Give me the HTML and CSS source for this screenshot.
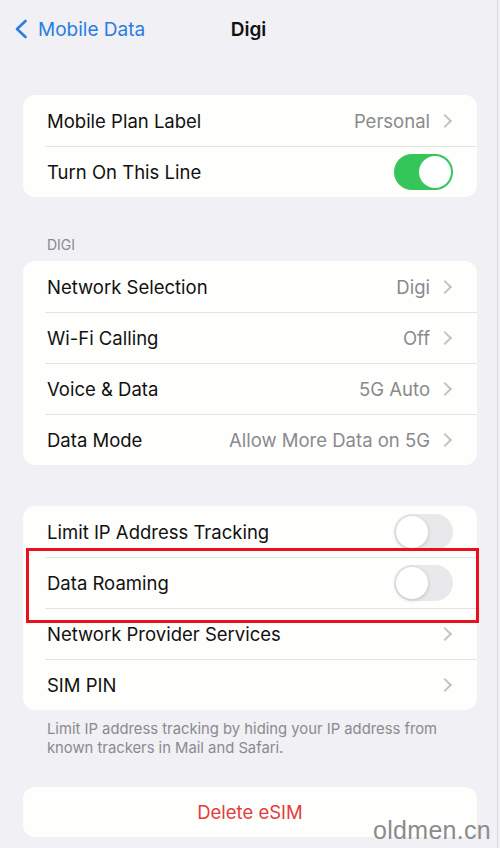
FILE: index.html
```html
<!DOCTYPE html>
<html lang="en">
  <head>
    <meta charset="UTF-8" />
    <meta name="viewport" content="width=device-width, initial-scale=1.0" />
    <title>Digi</title>
    <link rel="stylesheet" href="styles.css">
  </head>
  <body>
    <div class="screen">
      <header class="nav">
        <a class="nav-back" href="#">
          <svg class="nav-chevron" viewBox="0 0 14 20" width="14" height="20">
            <path d="M11.5 2 L3 10 L11.5 18" fill="none" stroke="currentColor" stroke-width="2.6" stroke-linecap="round" stroke-linejoin="round"/>
          </svg>
          <span>Mobile Data</span>
        </a>
        <h1 class="nav-title">Digi</h1>
        <span></span>
      </header>

      <main class="main">
        <ul class="group">
          <li class="row">
            <span class="row-label">Mobile Plan Label</span>
            <span class="row-value">Personal</span>
            <span class="chev"></span>
          </li>
          <li class="row">
            <span class="row-label">Turn On This Line</span>
            <span class="toggle on"></span>
          </li>
        </ul>

        <h2 class="group-title">DIGI</h2>
        <ul class="group">
          <li class="row">
            <span class="row-label">Network Selection</span>
            <span class="row-value">Digi</span>
            <span class="chev"></span>
          </li>
          <li class="row">
            <span class="row-label">Wi-Fi Calling</span>
            <span class="row-value">Off</span>
            <span class="chev"></span>
          </li>
          <li class="row">
            <span class="row-label">Voice &amp; Data</span>
            <span class="row-value">5G Auto</span>
            <span class="chev"></span>
          </li>
          <li class="row">
            <span class="row-label">Data Mode</span>
            <span class="row-value">Allow More Data on 5G</span>
            <span class="chev"></span>
          </li>
        </ul>

        <ul class="group group-marked">
          <li class="row">
            <span class="row-label">Limit IP Address Tracking</span>
            <span class="toggle"></span>
          </li>
          <li class="row">
            <span class="row-label">Data Roaming</span>
            <span class="toggle"></span>
          </li>
          <li class="row">
            <span class="row-label">Network Provider Services</span>
            <span class="chev"></span>
          </li>
          <li class="row">
            <span class="row-label">SIM PIN</span>
            <span class="chev"></span>
          </li>
          <li class="mark"></li>
        </ul>
        <p class="group-note">Limit IP address tracking by hiding your IP address from known trackers in Mail and Safari.</p>

        <div class="group">
          <button class="danger">Delete eSIM</button>
        </div>
      </main>

      <div class="watermark">oldmen.cn</div>
    </div>
  </body>
</html>
```

FILE: styles.css
```css
body {
  margin: 0;
  background: #f0f0f5;
  font-family: Inter, "Noto Sans", sans-serif;
  color: #111;
}
.screen {
  position: relative;
  width: 497px;
  height: 848px;
  border-right: 1px solid #dcdce1;
  overflow: hidden;
}

.nav {
  display: grid;
  grid-template-columns: 1fr auto 1fr;
  align-items: center;
  height: 58px;
}
.nav-back {
  display: flex;
  align-items: center;
  gap: 10px;
  padding-left: 14px;
  color: #2a7de1;
  text-decoration: none;
  font-size: 19px;
}
.nav-title {
  margin: 0;
  font-size: 19px;
  font-weight: 600;
}

.main {
  padding: 37px 20px 0 23px;
}
.group {
  list-style: none;
  margin: 0;
  padding: 0;
  background: #fefefc;
  border-radius: 12px;
}
.group-marked {
  position: relative;
  margin-top: 41px;
}
.row {
  display: flex;
  align-items: center;
  height: 50px;
  margin-left: 22px;
  padding: 0 24px 0 2px;
  border-top: 1px solid #e4e4e7;
  font-size: 18.5px;
}
.row:first-child {
  height: 51px;
  border-top: 0;
}
.row-label {
  flex: 1;
}
.row-value {
  color: #8a8a8e;
}
.chev {
  width: 8px;
  height: 8px;
  margin: 0 3px 0 10px;
  border-top: 2px solid #c4c4c8;
  border-right: 2px solid #c4c4c8;
  transform: rotate(45deg);
}

.toggle {
  position: relative;
  width: 59px;
  height: 36px;
  border-radius: 18px;
  background: #e9e9eb;
}
.toggle::after {
  content: "";
  position: absolute;
  left: 2px;
  top: 2px;
  width: 32px;
  height: 32px;
  border-radius: 50%;
  background: #fff;
  box-shadow: 0 1px 4px rgba(0, 0, 0, 0.18);
}
.toggle.on {
  background: #34c659;
}
.toggle.on::after {
  left: 25px;
  box-shadow: none;
}

.group-title {
  margin: 39px 0 8px 24px;
  font-size: 14px;
  font-weight: 400;
  color: #8a8a8e;
}
.group-note {
  margin: 10px 22px 29px 24px;
  font-size: 14.8px;
  line-height: 19px;
  color: #8a8a8e;
}

.mark {
  position: absolute;
  left: 3px;
  top: 42px;
  width: 447px;
  height: 69px;
  border: 3px solid #e8111b;
}

.danger {
  display: block;
  width: 100%;
  height: 50px;
  border: 0;
  background: none;
  font: inherit;
  font-size: 18.5px;
  color: #e23c3c;
}

.watermark {
  position: absolute;
  left: 373px;
  top: 816px;
  font-family: "Liberation Sans", sans-serif;
  font-size: 25px;
  color: #8c8c8c;
  letter-spacing: 0.3px;
}
```
